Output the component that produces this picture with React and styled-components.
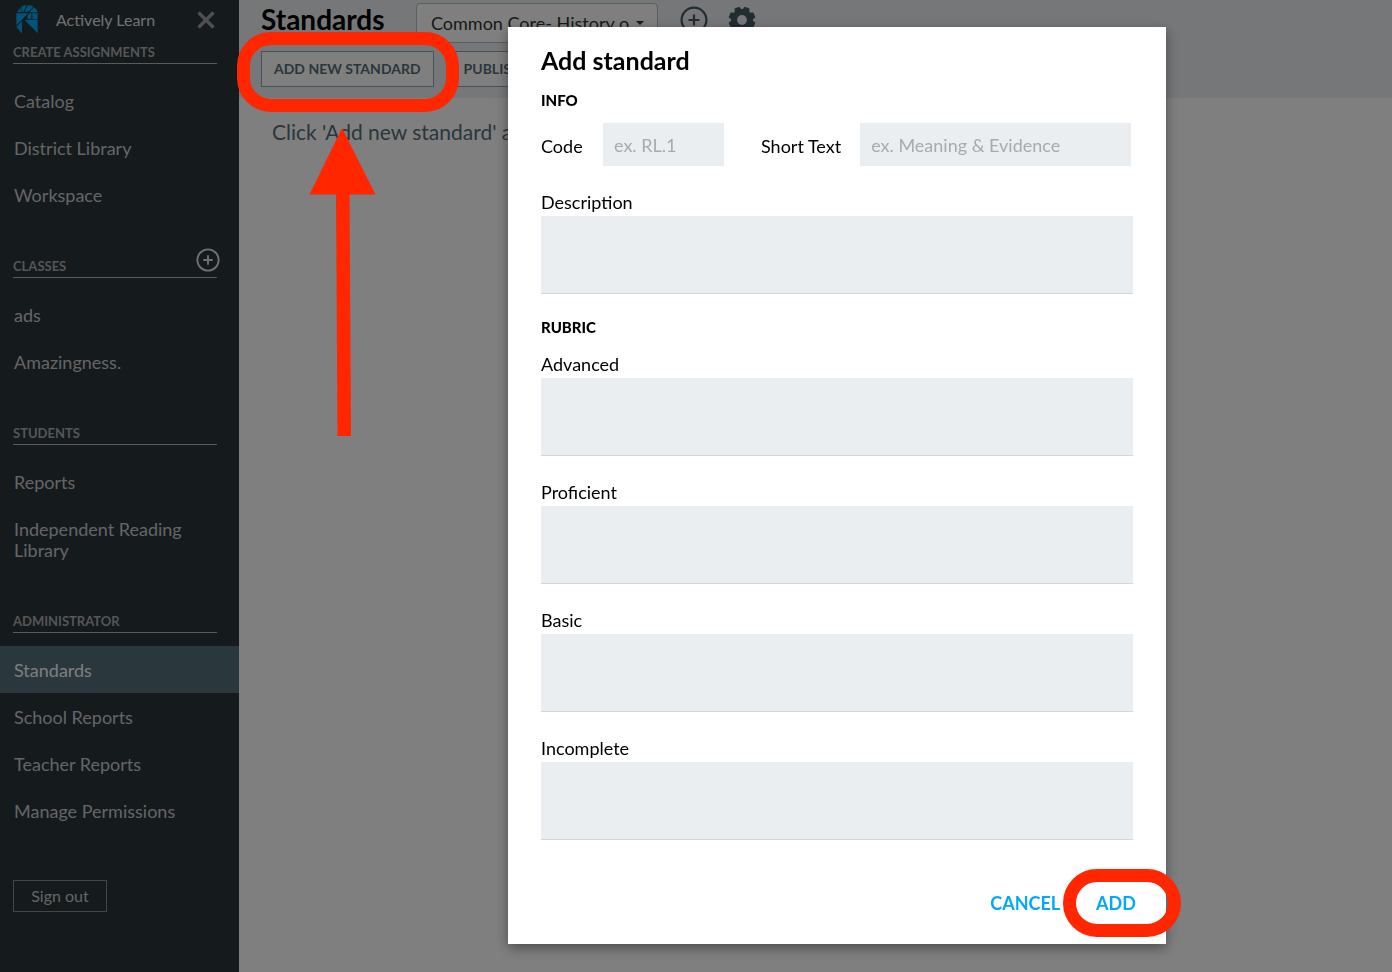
import React, { useState } from 'react';

//Styled Components
import styled, { createGlobalStyle } from 'styled-components';

//Menu lateral
const sections = [
    { title: 'CREATE ASSIGNMENTS', items: ['Catalog', 'District Library', 'Workspace'] },
    { title: 'CLASSES', items: ['ads', 'Amazingness.'], canAdd: true },
    { title: 'STUDENTS', items: ['Reports', 'Independent Reading Library'] },
    { title: 'ADMINISTRATOR', items: ['Standards', 'School Reports', 'Teacher Reports', 'Manage Permissions'] },
];

const levels = ['Advanced', 'Proficient', 'Basic', 'Incomplete'];

function Logo() {
    return (
        <svg width="22" height="30" viewBox="0 0 66 90" fill="#00a8f3">
            <path d="M3 22 L14 7 L14 22 Z M16 5 Q24 1 32 1 L22 20 L16 20 Z M35 1 Q48 1 52 5 L37 20 L26 20 Z M54 7 Q63 13 65 22 L40 22 Z" />
            <path d="M1 25 L37 25 L1 61 Z M41 25 L46 25 L46 41 L34 41 L34 32 Z M49 25 L65 25 L65 43 L49 43 Z" />
            <path d="M26 45 L65 45 L65 85 Z M1 65 L18 48 L18 86 Z" />
        </svg>
    );
}

function PlusCircle({ size }) {
    return (
        <svg width={size} height={size} viewBox="0 0 28 28" fill="none" stroke="currentColor" strokeWidth="2.2">
            <circle cx="14" cy="14" r="12.4" />
            <path d="M14 8.5v11M8.5 14h11" />
        </svg>
    );
}

function Gear() {
    const teeth = [22.5, 67.5, 112.5, 157.5, 202.5, 247.5, 292.5, 337.5];
    return (
        <svg width="28" height="28" viewBox="0 0 28 28" fill="currentColor">
            {teeth.map((angle) => (
                <path key={angle} d="M10 5 L11.4 0.6 H16.6 L18 5 Z" transform={`rotate(${angle} 14 14)`} />
            ))}
            <circle cx="14" cy="14" r="7.9" fill="none" stroke="currentColor" strokeWidth="6" />
        </svg>
    );
}

export default function App() {
    const [active, setActive] = useState('Standards');
    const [code, setCode] = useState('');
    const [shortText, setShortText] = useState('');

    return (
        <>
            <GlobalStyle />
            <Page>
                <Sidebar>
                    <Brand>
                        <Logo />
                        <BrandName>Actively Learn</BrandName>
                        <IconButton type="button" aria-label="Close menu">
                            <svg width="18" height="18" viewBox="0 0 18 18" stroke="currentColor" strokeWidth="3.4">
                                <path d="M1.5 1.5 L16.5 16.5 M16.5 1.5 L1.5 16.5" />
                            </svg>
                        </IconButton>
                    </Brand>
                    {sections.map((section) => (
                        <Section key={section.title}>
                            <SectionTitle>
                                {section.title}
                                {section.canAdd && (
                                    <AddClass type="button" aria-label="Add class">
                                        <PlusCircle size={24} />
                                    </AddClass>
                                )}
                            </SectionTitle>
                            {section.items.map((item) => (
                                <Item key={item} href="#" $active={item === active} onClick={() => setActive(item)}>
                                    {item}
                                </Item>
                            ))}
                        </Section>
                    ))}
                    <SignOut type="button">Sign out</SignOut>
                </Sidebar>

                <Main>
                    <Header>
                        <TitleRow>
                            <Title>Standards</Title>
                            <SetButton type="button" aria-haspopup="listbox">
                                Common Core- History o
                                <Caret />
                            </SetButton>
                            <Tools>
                                <IconButton type="button" aria-label="Add set" $dark>
                                    <PlusCircle size={28} />
                                </IconButton>
                                <IconButton type="button" aria-label="Settings" $dark>
                                    <Gear />
                                </IconButton>
                            </Tools>
                        </TitleRow>
                        <Actions>
                            <Marked>
                                <Outline type="button">ADD NEW STANDARD</Outline>
                                <HeaderRing />
                                <Arrow width="68" height="310" viewBox="0 0 68 310" fill="#ff2600">
                                    <path d="M33 0 L66.500 66.500 H40.500 L42 308 H28.500 L27 66.500 H0.500 Z" />
                                </Arrow>
                            </Marked>
                            <Outline type="button">PUBLISH</Outline>
                        </Actions>
                    </Header>
                    <Hint>Click 'Add new standard' and</Hint>
                </Main>
            </Page>

            <Overlay>
                <Dialog role="dialog" aria-labelledby="dialog-title">
                    <DialogTitle id="dialog-title">Add standard</DialogTitle>
                    <Group>INFO</Group>
                    <InfoRow>
                        <InfoField $grow={0}>
                            <InlineLabel htmlFor="code">Code</InlineLabel>
                            <ShortInput id="code" placeholder="ex. RL.1" value={code}
                            onChange={(e) => setCode(e.target.value)} $width="121px" />
                        </InfoField>
                        <InfoField $grow={1}>
                            <InlineLabel htmlFor="short">Short Text</InlineLabel>
                            <ShortInput id="short" placeholder="ex. Meaning &amp; Evidence" value={shortText}
                            onChange={(e) => setShortText(e.target.value)} $width="100%" />
                        </InfoField>
                    </InfoRow>
                    <Field>
                        <Label htmlFor="description">Description</Label>
                        <TextArea id="description" />
                    </Field>
                    <RubricGroup>RUBRIC</RubricGroup>
                    <Levels>
                        {levels.map((level) => (
                            <Field key={level}>
                                <Label htmlFor={level}>{level}</Label>
                                <TextArea id={level} />
                            </Field>
                        ))}
                    </Levels>
                    <Footer>
                        <LinkButton type="button">CANCEL</LinkButton>
                        <Marked>
                            <LinkButton type="submit">ADD</LinkButton>
                            <FooterRing />
                        </Marked>
                    </Footer>
                </Dialog>
            </Overlay>
        </>
    );
}

const GlobalStyle = createGlobalStyle`
    * {
        box-sizing: border-box;
    }
    body {
        margin: 0;
        background: white;
    }
    body, button, input, textarea {
        font-family: Lato, 'Open Sans', sans-serif;
    }
`;

const Page = styled.div`
    display: flex;
    min-height: 100vh;
`;

const Sidebar = styled.nav`
    flex: 0 0 239px;
    background: #2a343a;
`;

const Brand = styled.div`
    display: flex;
    align-items: center;
    height: 41px;
    padding: 0 24px 2px 16px;
`;

const BrandName = styled.span`
    flex: 1;
    padding-left: 18px;
    font-size: 16px;
    line-height: 20px;
    color: #e0e0e0;
`;

const IconButton = styled.button`
    display: flex;
    padding: 0;
    border: 0;
    background: none;
    color: ${(props) => (props.$dark ? '#455a64' : '#9e9e9e')};
    cursor: pointer;
`;

const Section = styled.section`
    margin-bottom: 37px;
`;

const SectionTitle = styled.h2`
    display: flex;
    justify-content: space-between;
    margin: 0 22px 13px 13px;
    border-bottom: 1px solid #b0b4b6;
    font-size: 13px;
    font-weight: 700;
    line-height: 22px;
    color: #a8acae;
`;

const AddClass = styled(IconButton)`
    height: 22px;
    margin: -6px -3px 6px 0;
    align-items: center;
    color: #e0e0e0;
`;

const Item = styled.a`
    display: block;
    padding: 14px 40px 12px 14px;
    background: ${(props) => (props.$active ? '#546e7a' : 'transparent')};
    color: ${(props) => (props.$active ? '#fafafa' : '#c8cbcc')};
    font-size: 18px;
    line-height: 21px;
    text-decoration: none;
`;

const SignOut = styled.button`
    width: 94px;
    height: 32px;
    margin: 9px 13px 0;
    padding: 0 0 2px;
    border: 1px solid #8a8a8a;
    background: none;
    font-size: 16px;
    color: #c8cbcc;
`;

const Main = styled.main`
    flex: 1;
    min-width: 0;
`;

const Header = styled.header`
    height: 98px;
    padding: 3px 22px 0;
    background: #eceff1;
`;

const TitleRow = styled.div`
    display: flex;
    align-items: flex-start;
`;

const Title = styled.h1`
    width: 155px;
    margin: 0;
    font-size: 28px;
    font-weight: 700;
    line-height: 32px;
`;

const SetButton = styled.button`
    display: flex;
    align-items: center;
    justify-content: space-between;
    width: 242px;
    height: 40px;
    padding: 0 13px 0 14px;
    border: 1px solid #b0bec5;
    border-radius: 4px;
    background: white;
    font-size: 18px;
    color: #333;
`;

const Caret = styled.span`
    border: 4px solid transparent;
    border-top-color: currentColor;
    border-bottom: 0;
`;

const Tools = styled.div`
    display: flex;
    gap: 20px;
    margin: 3px 0 0 22px;
`;

const Actions = styled.div`
    display: flex;
    gap: 17px;
    margin-top: 8px;
`;

const Marked = styled.div`
    position: relative;
`;

const Outline = styled.button`
    height: 36px;
    padding: 0 12px 1px;
    border: 1px solid #90a4ae;
    background: white;
    font-size: 14px;
    font-weight: 700;
    color: #546e7a;
`;

const Ring = styled.span`
    position: absolute;
    z-index: 20;
    border: 13px solid #ff2600;
    border-radius: 34px;
    pointer-events: none;
`;

const HeaderRing = styled(Ring)`
    inset: -19px -25px -25px -24px;
`;

const FooterRing = styled(Ring)`
    width: 118px;
    height: 68px;
    top: -16px;
    right: -45px;
`;

const Arrow = styled.svg`
    position: absolute;
    z-index: 20;
    top: 77px;
    left: 48px;
    pointer-events: none;
`;

const Hint = styled.p`
    margin: 21px 33px;
    font-size: 21px;
    line-height: 26px;
    color: #546e7a;
`;

const Overlay = styled.div`
    position: fixed;
    inset: 0;
    z-index: 10;
    display: flex;
    align-items: flex-start;
    justify-content: center;
    padding: 27px 0 0 282px;
    background: rgba(0, 0, 0, 0.5);
`;

const Dialog = styled.form`
    width: 658px;
    padding: 18px 33px 23px;
    background: white;
    box-shadow: 0 4px 12px rgba(0, 0, 0, 0.4);
    color: black;
`;

const DialogTitle = styled.h2`
    margin: 0 0 16px;
    font-size: 25px;
    font-weight: 700;
    line-height: 30px;
`;

const Group = styled.h3`
    margin: 0 0 14px;
    font-size: 15px;
    font-weight: 900;
    line-height: 18px;
`;

const RubricGroup = styled(Group)`
    margin: 24px 0 16px;
`;

const InfoRow = styled.div`
    display: flex;
    gap: 37px;
    margin: 0 2px 24px 0;
`;

const InfoField = styled.div`
    display: flex;
    align-items: center;
    justify-content: space-between;
    flex: ${(props) => props.$grow} 0 183px;
    gap: 19px;
`;

const Label = styled.label`
    padding-bottom: 2px;
    font-size: 18px;
    line-height: 24px;
`;

const InlineLabel = styled(Label)`
    padding: 2px 0 0;
    white-space: nowrap;
`;

const ShortInput = styled.input`
    width: ${(props) => props.$width};
    min-width: 0;
    height: 43px;
    padding: 0 11px;
    border: 0;
    background: #eaeef1;
    font-size: 18px;

    &::placeholder {
        color: #aaa;
    }
`;

const Field = styled.div`
    display: flex;
    flex-direction: column;
`;

const Levels = styled.div`
    display: grid;
    gap: 24px;
`;

const TextArea = styled.textarea`
    height: 78px;
    padding: 8px 11px;
    border: 0;
    border-bottom: 1px solid #cfd8dc;
    background: #eaeef1;
    font-size: 18px;
    resize: none;
`;

const Footer = styled.footer`
    display: flex;
    justify-content: flex-end;
    gap: 36px;
    margin: 45px -3px 0 0;
`;

const LinkButton = styled.button`
    height: 36px;
    padding: 0;
    border: 0;
    background: none;
    font-size: 18px;
    font-weight: 700;
    color: #03a9f4;
`;
